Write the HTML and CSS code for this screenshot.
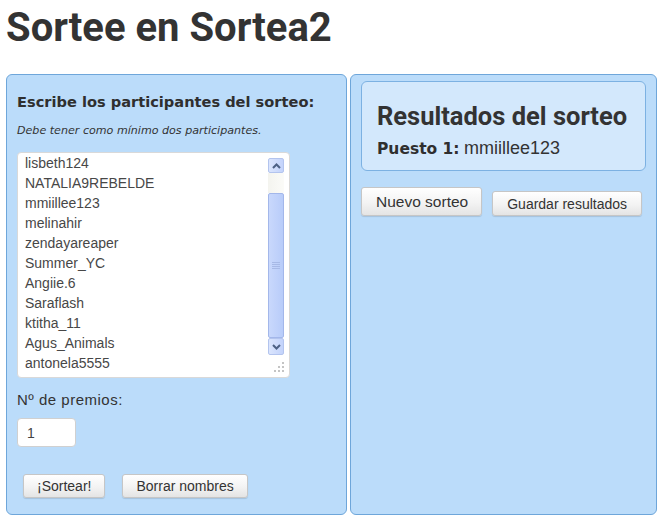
FILE: index.html
```html
<!DOCTYPE html>
<html lang="es">
<head>
<meta charset="utf-8">
<title>Sortee en Sortea2</title>
<link rel="stylesheet" href="styles.css">
</head>
<body>
<h1 class="title">Sortee en Sortea2</h1>
<div class="columns">
  <section class="panel panel-left">
    <h2 class="panel-heading">Escribe los participantes del sorteo:</h2>
    <p class="hint">Debe tener como mínimo dos participantes.</p>
    <div class="names">
      <div class="names-list">
        <div class="name">lisbeth124</div>
        <div class="name">NATALIA9REBELDE</div>
        <div class="name">mmiillee123</div>
        <div class="name">melinahir</div>
        <div class="name">zendayareaper</div>
        <div class="name">Summer_YC</div>
        <div class="name">Angiie.6</div>
        <div class="name">Saraflash</div>
        <div class="name">ktitha_11</div>
        <div class="name">Agus_Animals</div>
        <div class="name">antonela5555</div>
      </div>
      <div class="scrollbar">
        <div class="sb-btn sb-up">
          <svg width="9" height="6" viewBox="0 0 9 6"><path d="M1 5 L4.5 1.5 L8 5" fill="none" stroke="#4d6185" stroke-width="2"/></svg>
        </div>
        <div class="sb-track"></div>
        <div class="sb-thumb">
          <svg width="8" height="7" viewBox="0 0 8 7"><path d="M0 0.5H8M0 2.5H8M0 4.5H8M0 6.5H8" stroke="#a7b9e6" stroke-width="1"/></svg>
        </div>
        <div class="sb-btn sb-down">
          <svg width="9" height="6" viewBox="0 0 9 6"><path d="M1 1 L4.5 4.5 L8 1" fill="none" stroke="#4d6185" stroke-width="2"/></svg>
        </div>
      </div>
      <svg class="grip" width="12" height="12" viewBox="0 0 12 12">
        <rect x="9" y="1" width="2" height="2" fill="#c4c4c4"/>
        <rect x="5" y="5" width="2" height="2" fill="#c4c4c4"/>
        <rect x="9" y="5" width="2" height="2" fill="#c4c4c4"/>
        <rect x="1" y="9" width="2" height="2" fill="#c4c4c4"/>
        <rect x="5" y="9" width="2" height="2" fill="#c4c4c4"/>
        <rect x="9" y="9" width="2" height="2" fill="#c4c4c4"/>
      </svg>
    </div>
    <label class="prizes-label" for="premios">Nº de premios:</label>
    <input class="prizes-input" id="premios" type="text" value="1">
    <div class="actions">
      <button class="btn">¡Sortear!</button>
      <button class="btn">Borrar nombres</button>
    </div>
  </section>
  <section class="panel panel-right">
    <div class="results">
      <h2 class="results-title">Resultados del sorteo</h2>
      <p class="result-row"><strong class="place">Puesto 1:</strong> <span class="winner">mmiillee123</span></p>
    </div>
    <div class="actions-right">
      <button class="btn btn-tall">Nuevo sorteo</button>
      <button class="btn btn-wide">Guardar resultados</button>
    </div>
  </section>
</div>
</body>
</html>
```
FILE: styles.css
```css
html, body {
  margin: 0;
  padding: 0;
  background: #ffffff;
}
body {
  padding-left: 6px;
  font-family: "Liberation Sans", Arial, sans-serif;
  color: #333333;
}
.title {
  margin: 4px 0 22px 0;
  font-family: Roboto, "DejaVu Sans", sans-serif;
  font-weight: 700;
  font-size: 40px;
  line-height: 48px;
  color: #333333;
}
.columns {
  display: flex;
  gap: 3px;
  align-items: flex-start;
}
.panel {
  box-sizing: border-box;
  height: 441px;
  background: #bbdcfa;
  border: 1px solid #6ea6da;
  border-radius: 6px;
}
.panel-left {
  width: 341px;
  padding: 18px 0 0 10px;
}
.panel-right {
  width: 307px;
  padding: 6px 10px 0 10px;
}
.panel-heading {
  margin: 0;
  font-family: "DejaVu Sans", Verdana, sans-serif;
  font-weight: 700;
  font-size: 14.6px;
  line-height: 18px;
  color: #2f2f2f;
}
.hint {
  margin: 13px 0 0 0;
  font-family: "DejaVu Sans", Verdana, sans-serif;
  font-style: italic;
  font-size: 11.1px;
  line-height: 14px;
  color: #333333;
}
.names {
  position: relative;
  box-sizing: border-box;
  margin-top: 14px;
  width: 273px;
  height: 226px;
  background: #ffffff;
  border: 1px solid #d9d9d9;
  border-radius: 4px;
  display: flex;
  align-items: flex-start;
}
.names-list {
  flex: 1;
  padding: 0 0 0 7px;
}
.name {
  font-size: 14px;
  line-height: 20px;
  color: #474747;
  white-space: nowrap;
}
.scrollbar {
  margin: 5px 5px 0 0;
  width: 16px;
  height: 197px;
  display: flex;
  flex-direction: column;
}
.sb-btn {
  box-sizing: border-box;
  display: flex;
  align-items: center;
  justify-content: center;
  border: 1px solid #b3c4ee;
  border-radius: 2px;
  background: linear-gradient(90deg, #dbe5fd, #c3d3fb);
}
.sb-up {
  height: 15px;
}
.sb-down {
  height: 17px;
}
.sb-track {
  height: 20px;
  background: linear-gradient(90deg, #f4f4ef, #fbfbf8);
}
.sb-thumb {
  box-sizing: border-box;
  height: 145px;
  display: flex;
  align-items: center;
  justify-content: center;
  border: 1px solid #a3b7ea;
  border-radius: 2px;
  background: linear-gradient(90deg, #c9d8fc, #b8ccf9);
}
.grip {
  position: absolute;
  right: 4px;
  bottom: 4px;
}
.prizes-label {
  display: block;
  margin-top: 13px;
  font-size: 15px;
  line-height: 18px;
  letter-spacing: 0.5px;
  color: #333333;
}
.prizes-input {
  display: block;
  box-sizing: border-box;
  margin-top: 9px;
  width: 59px;
  height: 29px;
  padding: 0 0 0 9px;
  border: 1px solid #d0d0d0;
  border-radius: 4px;
  background: #ffffff;
  font-family: "Liberation Sans", Arial, sans-serif;
  font-size: 14px;
  color: #444444;
}
.actions {
  display: flex;
  gap: 17px;
  margin: 27px 0 0 6px;
}
.btn {
  box-sizing: border-box;
  height: 24px;
  padding: 0 13px;
  border: 1px solid #c6c6c6;
  border-radius: 3px;
  background: linear-gradient(180deg, #ffffff 0%, #f3f3f3 55%, #e4e4e4 100%);
  box-shadow: 0 1px 1px rgba(0, 0, 0, 0.12);
  font-family: "Liberation Sans", Arial, sans-serif;
  font-size: 14px;
  color: #333333;
}
.btn-tall {
  height: 29px;
  padding: 0 13px 0 14px;
  font-size: 15.5px;
}
.btn-wide {
  height: 25px;
  padding: 0 14px;
}
.results {
  box-sizing: border-box;
  height: 90px;
  padding: 19px 15px 0 15px;
  background: #d3e8fc;
  border: 1px solid #7cb1e2;
  border-radius: 6px;
}
.results-title {
  margin: 0;
  font-family: Roboto, "DejaVu Sans", sans-serif;
  font-weight: 700;
  font-size: 25.5px;
  line-height: 30px;
  color: #333333;
}
.result-row {
  margin: 7px 0 0 0;
  line-height: 20px;
  white-space: nowrap;
}
.place {
  font-family: "DejaVu Sans", Verdana, sans-serif;
  font-weight: 700;
  font-size: 15.5px;
  color: #2f2f2f;
}
.winner {
  font-size: 18px;
  color: #333333;
}
.actions-right {
  display: flex;
  align-items: flex-end;
  gap: 10px;
  margin-top: 16px;
}
```
